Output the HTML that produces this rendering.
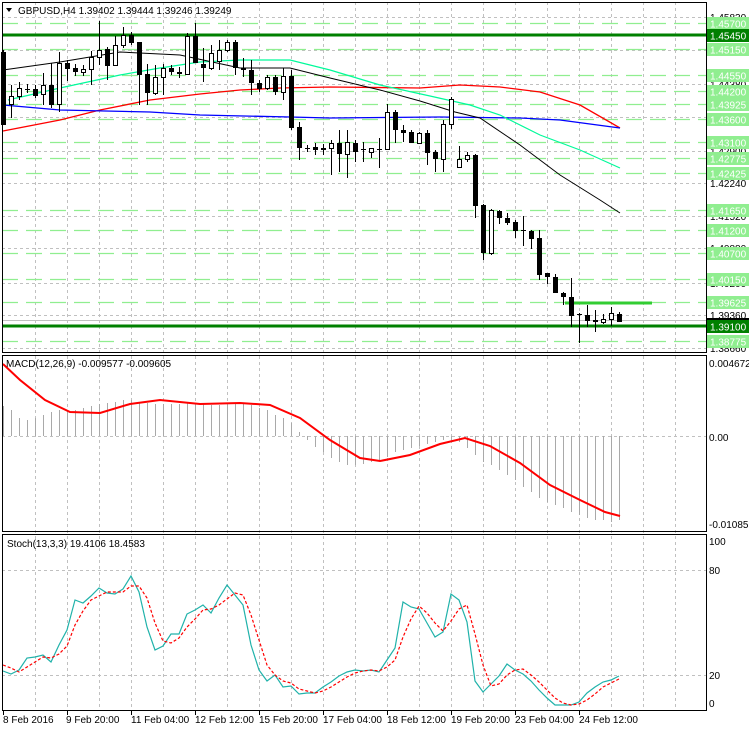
<!DOCTYPE html>
<html><head><meta charset="utf-8"><style>
html,body{margin:0;padding:0;background:#fff;}
svg{display:block;font-family:"Liberation Sans",sans-serif;font-size:10px;}
</style></head><body>
<svg width="749" height="731" viewBox="0 0 749 731" xmlns="http://www.w3.org/2000/svg">
<rect width="749" height="731" fill="#fff"/>
<g stroke="#c0c0c0" stroke-dasharray="3 3" stroke-width="1">
<path d="M35.5,2V710M67.5,2V710M99.5,2V710M131.5,2V710M163.5,2V710M195.5,2V710M227.5,2V710M259.5,2V710M291.5,2V710M323.5,2V710M355.5,2V710M387.5,2V710M419.5,2V710M451.5,2V710M483.5,2V710M515.5,2V710M547.5,2V710M579.5,2V710M611.5,2V710M643.5,2V710M675.5,2V710"/>
<path d="M2,17.5H706M2,50.5H706M2,84.5H706M2,117.5H706M2,151.5H706M2,183.5H706M2,216.5H706M2,248.5H706M2,283.5H706M2,315.5H706M2,348.5H706"/>
<path d="M2,436.5H706M2,570.5H706M2,675.5H706"/>
</g>
<g stroke="#90ee90" stroke-dasharray="16 8" stroke-width="1.2">
<path d="M2,23.5H706M2,49.5H706M2,75.5H706M2,91.5H706M2,104.5H706M2,119.5H706M2,142.5H706M2,158.5H706M2,173.5H706M2,210.5H706M2,230.5H706M2,253.5H706M2,279.5H706M2,302.5H706M2,341.5H706"/>
</g>
<path d="M2,320.5H706" stroke="#c0c0c0" stroke-width="1"/>
<path d="M2,35H706M2,326H706" stroke="#008000" stroke-width="3"/>
<path d="M565,303H652" stroke="#32cd32" stroke-width="3"/>
<polyline fill="none" stroke="#ff0000" stroke-width="1.3" points="3,131 60,120 100,110 150,100 200,94 240,90 280,88 330,87 420,88 460,85 500,87 540,92 580,105 620,128"/>
<polyline fill="none" stroke="#0000ff" stroke-width="1.3" points="3,105 60,110 150,112 200,115 290,117 330,118 440,117 520,118 560,120 620,128"/>
<polyline fill="none" stroke="#00fa9a" stroke-width="1.2" points="8,100 60,88 120,75 160,68 200,62 240,60 290,60 330,70 380,85 430,96 470,105 500,115 540,135 580,150 620,168"/>
<polyline fill="none" stroke="#000" stroke-width="1" points="3,70 60,62 120,52 180,55 240,68 290,68 330,78 380,90 420,101 455,112 480,118 520,145 560,175 600,200 620,213"/>
<path fill="none" stroke="#000" stroke-width="1" d="M3.5,50V125M11.5,85V118M19.5,82V100M27.5,84V93M35.5,85V98M43.5,73V105M51.5,63V108M59.5,52V112M67.5,60V81M75.5,64V76M83.5,65V76M91.5,51V85M99.5,21V65M107.5,47V80M115.5,36V65M123.5,27V48M131.5,32V45M139.5,42V105M147.5,64V105M155.5,65V95M163.5,64V95M171.5,65V75M179.5,67V78M187.5,33V75M195.5,23V63M203.5,48V82M211.5,45V70M219.5,40V70M227.5,40V52M235.5,40V75M243.5,58V77M251.5,60V95M259.5,80V92M267.5,75V90M275.5,75V95M283.5,68V100M291.5,70V130M299.5,122V160M307.5,145V152M315.5,143V155M323.5,144V155M331.5,140V175M339.5,130V172M347.5,130V178M355.5,140V162M363.5,142V162M371.5,148V158M379.5,138V168M387.5,104V150M395.5,110V143M403.5,125V142M411.5,130V143M419.5,132V143M427.5,130V165M435.5,150V172M443.5,120V172M451.5,97V129M459.5,146V168M467.5,152V162M475.5,154V218M483.5,204V260M491.5,209V255M499.5,210V224M507.5,213V225M515.5,220V238M523.5,216V246M531.5,230V249M539.5,230V280M547.5,273V284M555.5,274V293M563.5,292V305M571.5,278V327M579.5,313V343M587.5,305V327M595.5,310V332M603.5,314V324M611.5,307V326M619.5,312V322"/>
<g fill="#000">
<rect x="1" y="52" width="5" height="73"/><rect x="25" y="89" width="5" height="1"/><rect x="33" y="89" width="5" height="7"/><rect x="49" y="85" width="5" height="20"/><rect x="65" y="63" width="5" height="6"/><rect x="73" y="68" width="5" height="4"/><rect x="105" y="49" width="5" height="17"/><rect x="129" y="35" width="5" height="8"/><rect x="137" y="42" width="5" height="33"/><rect x="145" y="74" width="5" height="19"/><rect x="169" y="68" width="5" height="4"/><rect x="177" y="72" width="5" height="2"/><rect x="193" y="36" width="5" height="27"/><rect x="201" y="64" width="5" height="4"/><rect x="233" y="42" width="5" height="26"/><rect x="241" y="68" width="5" height="2"/><rect x="249" y="70" width="5" height="13"/><rect x="257" y="83" width="5" height="6"/><rect x="273" y="77" width="5" height="15"/><rect x="289" y="76" width="5" height="52"/><rect x="297" y="127" width="5" height="21"/><rect x="305" y="148" width="5" height="1"/><rect x="313" y="147" width="5" height="3"/><rect x="321" y="148" width="5" height="2"/><rect x="337" y="143" width="5" height="11"/><rect x="353" y="143" width="5" height="9"/><rect x="361" y="149" width="5" height="1"/><rect x="377" y="149" width="5" height="1"/><rect x="393" y="112" width="5" height="18"/><rect x="401" y="130" width="5" height="3"/><rect x="409" y="132" width="5" height="11"/><rect x="425" y="133" width="5" height="20"/><rect x="433" y="152" width="5" height="7"/><rect x="473" y="155" width="5" height="51"/><rect x="481" y="205" width="5" height="48"/><rect x="497" y="211" width="5" height="7"/><rect x="505" y="218" width="5" height="5"/><rect x="513" y="222" width="5" height="9"/><rect x="521" y="230" width="5" height="1"/><rect x="529" y="231" width="5" height="8"/><rect x="537" y="238" width="5" height="37"/><rect x="545" y="273" width="5" height="4"/><rect x="553" y="277" width="5" height="16"/><rect x="561" y="293" width="5" height="4"/><rect x="569" y="297" width="5" height="19"/><rect x="577" y="314" width="5" height="1"/><rect x="585" y="315" width="5" height="6"/><rect x="593" y="320" width="5" height="2"/><rect x="617" y="314" width="5" height="8"/>
</g>
<g fill="#fff" stroke="#000" stroke-width="1">
<rect x="9.5" y="96.5" width="4" height="8"/><rect x="17.5" y="88.5" width="4" height="8"/><rect x="41.5" y="85.5" width="4" height="9"/><rect x="57.5" y="63.5" width="4" height="41"/><rect x="81.5" y="69.5" width="4" height="3"/><rect x="89.5" y="57.5" width="4" height="12"/><rect x="97.5" y="50.5" width="4" height="7"/><rect x="113.5" y="45.5" width="4" height="20"/><rect x="121.5" y="35.5" width="4" height="10"/><rect x="153.5" y="77.5" width="4" height="16"/><rect x="161.5" y="68.5" width="4" height="9"/><rect x="185.5" y="36.5" width="4" height="38"/><rect x="209.5" y="53.5" width="4" height="15"/><rect x="217.5" y="50.5" width="4" height="11"/><rect x="225.5" y="42.5" width="4" height="8"/><rect x="265.5" y="77.5" width="4" height="11"/><rect x="281.5" y="76.5" width="4" height="16"/><rect x="329.5" y="143.5" width="4" height="5"/><rect x="345.5" y="142.5" width="4" height="12"/><rect x="369.5" y="148.5" width="4" height="4"/><rect x="385.5" y="112.5" width="4" height="37"/><rect x="417.5" y="133.5" width="4" height="10"/><rect x="441.5" y="124.5" width="4" height="35"/><rect x="449.5" y="99.5" width="4" height="25"/><rect x="457.5" y="159.5" width="4" height="8"/><rect x="465.5" y="155.5" width="4" height="4"/><rect x="489.5" y="210.5" width="4" height="43"/><rect x="601.5" y="319.5" width="4" height="3"/><rect x="609.5" y="313.5" width="4" height="6"/>
</g>
<path fill="none" stroke="#a9a9a9" stroke-width="1" d="M3.5,436V406M11.5,436V410M19.5,436V418M27.5,436V420M35.5,436V418M43.5,436V415M51.5,436V412M59.5,436V410M67.5,436V412M75.5,436V410M83.5,436V408M91.5,436V406M99.5,436V404M107.5,436V403M115.5,436V402M123.5,436V400M131.5,436V400M139.5,436V402M147.5,436V403M155.5,436V404M163.5,436V404M171.5,436V404M179.5,436V404M187.5,436V403M195.5,436V403M203.5,436V404M211.5,436V405M219.5,436V405M227.5,436V404M235.5,436V403M243.5,436V404M251.5,436V405M259.5,436V408M267.5,436V410M275.5,436V415M283.5,436V418M291.5,436V423M299.5,436V432M307.5,436V440M315.5,436V447M323.5,436V452M331.5,436V458M339.5,436V462M347.5,436V465M355.5,436V465M363.5,436V464M371.5,436V462M379.5,436V460M387.5,436V457M395.5,436V452M403.5,436V450M411.5,436V448M419.5,436V446M427.5,436V444M435.5,436V442M443.5,436V440M451.5,436V440M459.5,436V442M467.5,436V448M475.5,436V455M483.5,436V462M491.5,436V465M499.5,436V470M507.5,436V475M515.5,436V480M523.5,436V487M531.5,436V492M539.5,436V498M547.5,436V502M555.5,436V505M563.5,436V508M571.5,436V512M579.5,436V515M587.5,436V518M595.5,436V520M603.5,436V520M611.5,436V522M619.5,436V520"/>
<polyline fill="none" stroke="#ff0000" stroke-width="2" points="3,364 20,380 45,400 70,412 100,413 130,404 160,400 200,404 240,403 270,405 300,418 330,440 360,458 380,461 410,455 440,444 465,438 490,446 520,463 550,485 580,500 605,512 620,516"/>
<polyline fill="none" stroke="#20b2aa" stroke-width="1.2" points="3,671 11,674 19,670 27,658 35,657 43,655 51,662 59,645 67,630 75,600 83,603 91,596 99,588 107,593 115,594 123,589 131,576 139,592 147,627 155,650 163,646 171,634 179,634 187,614 195,610 203,605 211,613 219,598 227,585 235,595 243,605 251,645 259,670 267,681 275,675 283,687 291,686 299,694 307,693 315,693 323,687 331,682 339,676 347,672 355,670 363,671 371,670 379,672 387,660 395,648 403,602 411,607 419,609 427,623 435,637 443,632 451,594 459,600 467,622 475,681 483,692 491,684 499,676 507,664 515,670 523,674 531,681 539,690 547,698 555,705 563,705 571,705 579,702 587,693 595,687 603,682 611,680 619,676"/>
<polyline fill="none" stroke="#ff0000" stroke-width="1.2" stroke-dasharray="3 2" points="3,665 11,668 19,672 27,667 35,662 43,657 51,658 59,654 67,646 75,625 83,611 91,600 99,596 107,592 115,592 123,592 131,586 139,586 147,598 155,623 163,641 171,643 179,638 187,627 195,619 203,610 211,609 219,605 227,599 235,593 243,595 251,615 259,640 267,665 275,675 283,681 291,683 299,689 307,691 315,693 323,691 331,687 339,682 347,677 355,673 363,671 371,670 379,671 387,667 395,660 403,637 411,619 419,606 427,613 435,623 443,631 451,621 459,609 467,605 475,634 483,665 491,686 499,684 507,675 515,670 523,669 531,675 539,682 547,690 555,698 563,703 571,705 579,704 587,700 595,694 603,687 611,683 619,679"/>
<g fill="none" stroke="#000" stroke-width="1">
<rect x="2.5" y="2.5" width="704" height="350"/>
<rect x="2.5" y="355.5" width="704" height="176"/>
<rect x="2.5" y="534.5" width="704" height="176"/>
</g>
<path stroke="#000" d="M3.5,711V715M67.5,711V715M131.5,711V715M195.5,711V715M259.5,711V715M323.5,711V715M387.5,711V715M451.5,711V715M515.5,711V715M579.5,711V715"/>
<g fill="#000">
<text x="710" y="21">1.45830</text>
<text x="710" y="88">1.44380</text>
<text x="710" y="155">1.42900</text>
<text x="710" y="187">1.42240</text>
<text x="710" y="220">1.41520</text>
<text x="710" y="252">1.40880</text>
<text x="710" y="287">1.40200</text>
<text x="710" y="319">1.39360</text>
<text x="710" y="352">1.38660</text>
<text x="709" y="367">0.004672</text>
<text x="709" y="441">0.00</text>
<text x="709" y="528">-0.010857</text>
<text x="709" y="545">100</text>
<text x="709" y="574">80</text>
<text x="709" y="679">20</text>
<text x="709" y="707">0</text>
</g>
<rect x="707" y="318" width="42" height="8" fill="#000"/>
<g>
<rect x="707" y="17" width="42" height="13" fill="#90ee90"/>
<rect x="707" y="43" width="42" height="13" fill="#90ee90"/>
<rect x="707" y="69" width="42" height="13" fill="#90ee90"/>
<rect x="707" y="85" width="42" height="13" fill="#90ee90"/>
<rect x="707" y="98" width="42" height="13" fill="#90ee90"/>
<rect x="707" y="113" width="42" height="13" fill="#90ee90"/>
<rect x="707" y="136" width="42" height="13" fill="#90ee90"/>
<rect x="707" y="152" width="42" height="13" fill="#90ee90"/>
<rect x="707" y="167" width="42" height="13" fill="#90ee90"/>
<rect x="707" y="204" width="42" height="13" fill="#90ee90"/>
<rect x="707" y="224" width="42" height="13" fill="#90ee90"/>
<rect x="707" y="247" width="42" height="13" fill="#90ee90"/>
<rect x="707" y="273" width="42" height="13" fill="#90ee90"/>
<rect x="707" y="296" width="42" height="13" fill="#90ee90"/>
<rect x="707" y="335" width="42" height="13" fill="#90ee90"/>
<rect x="707" y="29" width="42" height="13" fill="#008000"/>
<rect x="707" y="320" width="42" height="13" fill="#008000"/>
</g>
<g fill="#fff">
<text x="710" y="27.5">1.45700</text>
<text x="710" y="39.5">1.45450</text>
<text x="710" y="53.5">1.45150</text>
<text x="710" y="79.5">1.44550</text>
<text x="710" y="95.5">1.44200</text>
<text x="710" y="108.5">1.43925</text>
<text x="710" y="123.5">1.43600</text>
<text x="710" y="146.5">1.43100</text>
<text x="710" y="162.5">1.42775</text>
<text x="710" y="177.5">1.42425</text>
<text x="710" y="214.5">1.41650</text>
<text x="710" y="234.5">1.41200</text>
<text x="710" y="257.5">1.40700</text>
<text x="710" y="283.5">1.40150</text>
<text x="710" y="306.5">1.39625</text>
<text x="710" y="330.5">1.39100</text>
<text x="710" y="345.5">1.38775</text>
</g>
<path d="M6,8H12L9,12Z" fill="#000"/>
<text x="18" y="14" fill="#000">GBPUSD,H4  1.39402 1.39444 1.39246 1.39249</text>
<text x="6" y="367" fill="#000">MACD(12,26,9) -0.009577 -0.009605</text>
<text x="7" y="547" fill="#000">Stoch(13,3,3) 19.4106 18.4583</text>
<g fill="#000">
<text x="3" y="723">8 Feb 2016</text>
<text x="66" y="723">9 Feb 20:00</text>
<text x="131" y="723">11 Feb 04:00</text>
<text x="195" y="723">12 Feb 12:00</text>
<text x="259" y="723">15 Feb 20:00</text>
<text x="323" y="723">17 Feb 04:00</text>
<text x="387" y="723">18 Feb 12:00</text>
<text x="451" y="723">19 Feb 20:00</text>
<text x="515" y="723">23 Feb 04:00</text>
<text x="579" y="723">24 Feb 12:00</text>
</g>
</svg>
</body></html>
